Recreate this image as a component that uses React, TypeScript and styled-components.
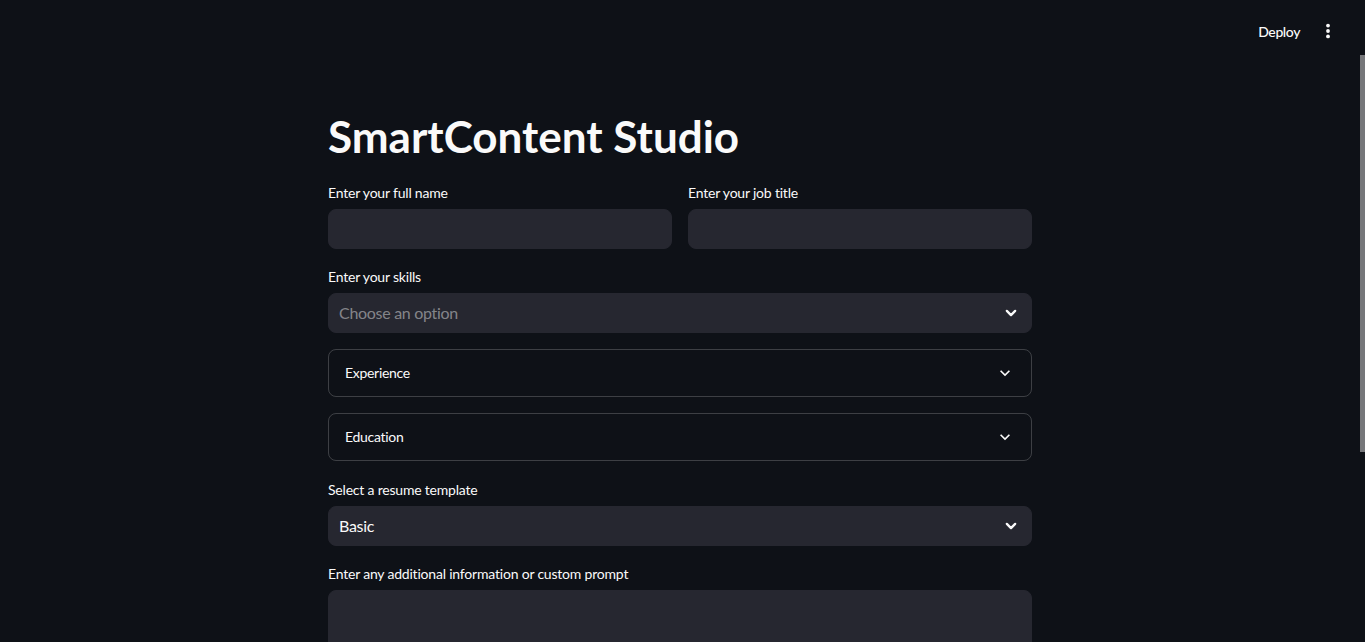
import React from "react";
import styled, { createGlobalStyle } from "styled-components";

const FONT = `"Lato", "Noto Sans", sans-serif`;

const Global = createGlobalStyle`
  html, body { margin: 0; padding: 0; height: 100%; background: #0e1117; }
  body { font-family: ${FONT}; color: #fafafa; overflow: hidden; }
  #root { height: 100%; }
  * { box-sizing: border-box; }
`;

const Page = styled.div`
  height: 642px;
  display: flex;
  flex-direction: column;
  background: #0e1117;
`;

const Header = styled.header`
  flex: 0 0 55px;
  display: flex;
  justify-content: flex-end;
  align-items: flex-start;
  padding: 11px 21px 0 0;
  gap: 4px;
`;

const DeployButton = styled.button`
  height: 40px;
  padding: 0 8px;
  background: transparent;
  border: none;
  color: #fafafa;
  font-family: ${FONT};
  font-size: 14px;
  font-weight: 500;
  letter-spacing: -0.4px;
  cursor: pointer;
`;

const IconButton = styled.button`
  width: 32px;
  height: 40px;
  padding: 0;
  background: transparent;
  border: none;
  display: flex;
  align-items: center;
  justify-content: center;
  color: #fafafa;
`;

const Body = styled.div`
  flex: 1;
  min-height: 0;
  display: flex;
`;

const Main = styled.main`
  flex: 1;
  min-width: 0;
  overflow: hidden;
`;

const ScrollTrack = styled.div`
  flex: 0 0 5px;
  display: flex;
  flex-direction: column;
`;

const ScrollThumb = styled.div`
  height: 397px;
  background: #76777a;
`;

const Block = styled.div`
  width: 704px;
  margin: 0 auto;
  padding: 55px 0 229px;
  display: flex;
  flex-direction: column;
  gap: 16px;
`;

const Title = styled.h1`
  margin: 0;
  padding: 0 0 2px;
  font-size: 44px;
  font-weight: 700;
  line-height: 1.2;
  color: #fafafa;
`;

const Columns = styled.div`
  display: grid;
  grid-template-columns: 1fr 1fr;
  gap: 16px;
`;

const Field = styled.div<{ $offset?: number }>`
  display: flex;
  flex-direction: column;
  margin-top: ${(p) => p.$offset ?? 0}px;
`;

const Label = styled.label`
  height: 24px;
  margin-bottom: 4px;
  display: flex;
  align-items: center;
  font-size: 14px;
  letter-spacing: -0.2px;
  color: #fafafa;
`;

const TextInput = styled.div`
  height: 40px;
  border-radius: 8px;
  background: #262730;
  border: 1px solid #262730;
`;

const TextArea = styled.div`
  height: 104px;
  border-radius: 8px;
  background: #262730;
  border: 1px solid #262730;
`;

const Select = styled.div<{ $placeholder?: boolean }>`
  height: 40px;
  border-radius: 8px;
  background: #262730;
  border: 1px solid #262730;
  display: flex;
  align-items: center;
  justify-content: space-between;
  padding: 0 10px 0 10px;
  font-size: 16px;
  letter-spacing: -0.3px;
  color: ${(p) => (p.$placeholder ? "rgba(250,250,250,0.45)" : "#fafafa")};
`;

const Expander = styled.div`
  height: 48px;
  border: 1px solid rgba(250, 250, 250, 0.2);
  border-radius: 8px;
  display: flex;
  align-items: center;
  justify-content: space-between;
  padding: 0 16px;
  font-size: 14px;
  letter-spacing: -0.3px;
  color: #fafafa;
`;

const SelectChevron = () => (
  <svg width="20" height="20" viewBox="0 0 24 24" fill="none">
    <polyline points="7,9.5 12,14.5 17,9.5" stroke="#fafafa" strokeWidth="2.8" strokeLinecap="round" strokeLinejoin="round" />
  </svg>
);

const ExpandMore = () => (
  <svg width="20" height="20" viewBox="0 0 24 24">
    <path d="M16.59 8.59L12 13.17 7.41 8.59 6 10l6 6 6-6z" fill="#fafafa" />
  </svg>
);

const Kebab = () => (
  <svg width="24" height="24" viewBox="0 0 24 24">
    <circle cx="12" cy="6.6" r="1.9" fill="#fafafa" />
    <circle cx="12" cy="12" r="1.9" fill="#fafafa" />
    <circle cx="12" cy="17.4" r="1.9" fill="#fafafa" />
  </svg>
);

export default function App() {
  return (
    <>
      <Global />
      <Page>
        <Header>
          <DeployButton>Deploy</DeployButton>
          <IconButton aria-label="Main menu">
            <Kebab />
          </IconButton>
        </Header>
        <Body>
          <Main>
            <Block>
              <Title>SmartContent Studio</Title>
              <Columns>
                <Field>
                  <Label>Enter your full name</Label>
                  <TextInput />
                </Field>
                <Field>
                  <Label>Enter your job title</Label>
                  <TextInput />
                </Field>
              </Columns>
              <Field>
                <Label>Enter your skills</Label>
                <Select $placeholder>
                  <span>Choose an option</span>
                  <SelectChevron />
                </Select>
              </Field>
              <Expander>
                <span>Experience</span>
                <ExpandMore />
              </Expander>
              <Expander>
                <span>Education</span>
                <ExpandMore />
              </Expander>
              <Field $offset={1}>
                <Label>Select a resume template</Label>
                <Select>
                  <span>Basic</span>
                  <SelectChevron />
                </Select>
              </Field>
              <Field>
                <Label>Enter any additional information or custom prompt</Label>
                <TextArea />
              </Field>
            </Block>
          </Main>
          <ScrollTrack>
            <ScrollThumb />
          </ScrollTrack>
        </Body>
      </Page>
    </>
  );
}
